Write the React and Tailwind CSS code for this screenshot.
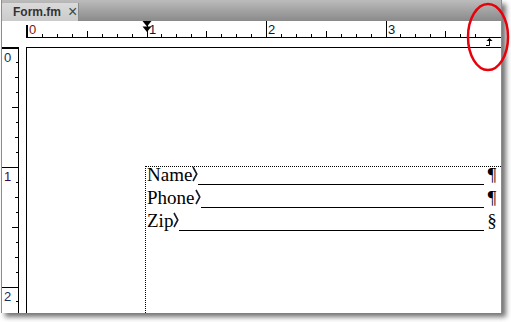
import React from "react";

const INCH = 119.5;

const HorizontalRuler = () => {
  const ticks = [];
  for (let i = 1; i <= 30; i++) {
    const left = Math.round(1 + (i * INCH) / 8);
    const h = i % 8 === 0 ? 16 : i % 4 === 0 ? 6 : 3;
    ticks.push(
      <div
        key={i}
        className="absolute w-px bg-black"
        style={{ left, top: 16 - h, height: h }}
      />
    );
  }
  const labels = [0, 1, 2, 3].map((n) => (
    <span
      key={n}
      className={`absolute top-[2px] text-[13px] leading-none ${n === 0 ? "text-[#7a1a06]" : "text-[#14143c]"}`}
      style={{ left: Math.round(1 + n * INCH) + 2 }}
    >
      {n}
    </span>
  ));

  return (
    <div className="flex h-[26px] font-['Liberation_Sans',sans-serif]">
      <div className="w-[24px]" />
      <div className="flex-1 flex flex-col">
        <div className="relative h-[17px] border-b border-black">
          <div className="absolute left-0 top-[4px] w-[2px] h-[12px] bg-black" />
          {ticks}
          {labels}
          {/* indent markers */}
          <svg className="absolute left-[116px] top-0" width="10" height="12" viewBox="0 0 10 12">
            <path d="M0.5 0 H9.5 L5 5.5 Z" fill="#000" />
            <path d="M0.5 5.5 H9.5 L5 11 Z" fill="#000" />
          </svg>
        </div>
        <div className="relative h-[9px]">
          <svg className="absolute left-[459px] top-0" width="9" height="9" viewBox="0 0 9 9">
            <path d="M4.5 0 L7.5 3 H1.5 Z" fill="#000" />
            <path d="M4.5 3 V7.5 H1" stroke="#000" strokeWidth="1" fill="none" />
          </svg>
        </div>
      </div>
    </div>
  );
};

const VerticalRuler = () => {
  const ticks = [];
  for (let i = 1; i <= 17; i++) {
    const top = Math.round(-1.5 + (i * INCH) / 8);
    const w = i % 8 === 0 ? 16 : i % 4 === 0 ? 6 : i % 2 === 0 ? 3 : 2;
    ticks.push(
      <div
        key={i}
        className="absolute right-0 h-px bg-black"
        style={{ top, width: w }}
      />
    );
  }
  const labels = [0, 1, 2].map((n) => (
    <span
      key={n}
      className={`absolute left-[2px] text-[13px] leading-none ${n === 1 ? "text-[#3c0a4c]" : "text-[#14305c]"}`}
      style={{ top: Math.round(-1.5 + n * INCH) + 3 }}
    >
      {n}
    </span>
  ));
  return (
    <div className="relative w-[17px] border-t-2 border-r border-black font-['Liberation_Sans',sans-serif]">
      {ticks}
      {labels}
    </div>
  );
};

const TabGlyph = () => (
  <svg width="6" height="16" viewBox="0 0 6 16" className="shrink-0 self-start mt-[-1px]">
    <path d="M1 1 L4.8 8 L1 15" stroke="#1b1b2e" strokeWidth="1.6" fill="none" />
  </svg>
);

const Field = ({ label, mark }) => (
  <div className="flex h-[23px] leading-[16px] items-start pr-[4px]">
    <span>{label}</span>
    <TabGlyph />
    <div className="flex-1 h-[18px] border-b border-black mr-[3px]" />
    <span className="w-[10px] text-center">{mark}</span>
  </div>
);

const App = () => {
  return (
    <div className="relative w-[511px] h-[322px] bg-white overflow-hidden">
      <div className="ml-[1px] w-[501px] h-[313px] flex flex-col bg-white border-x border-[#8c8c8c] shadow-[4px_4px_5px_rgba(0,0,0,0.55)]">
        {/* tab bar */}
        <div className="h-[21px] pt-[3px] bg-gradient-to-b from-[#bcbcbc] to-[#8a8a8a] flex">
          <div className="w-[77px] h-[18px] bg-gradient-to-b from-[#dadada] to-[#cbcbcb] border-r border-[#8a8a8a] flex items-center pl-[11px] gap-[7px] font-['Liberation_Sans',sans-serif] text-[12px] font-bold text-[#333]">
            <span>Form.fm</span>
            <span className="text-[16px] leading-none font-normal text-[#444]">×</span>
          </div>
        </div>

        <HorizontalRuler />

        <div className="flex-1 flex">
          <VerticalRuler />
          <div className="ml-[7px] flex-1 flex flex-col border-l border-t border-black">
            <div className="ml-[118px] mt-[118px] flex-1 border-l border-t border-dotted border-black pl-px font-['Liberation_Serif',serif] text-[19px] text-black">
              <Field label="Name" mark="¶" />
              <Field label="Phone" mark="¶" />
              <Field label="Zip" mark="§" />
            </div>
          </div>
        </div>
      </div>

      {/* red highlight */}
      <svg className="absolute left-[466px] top-[2px]" width="44" height="70" viewBox="0 0 44 70">
        <ellipse cx="22" cy="35" rx="20" ry="33" stroke="#e8000b" strokeWidth="2.5" fill="none" />
      </svg>
    </div>
  );
};

export default App;
